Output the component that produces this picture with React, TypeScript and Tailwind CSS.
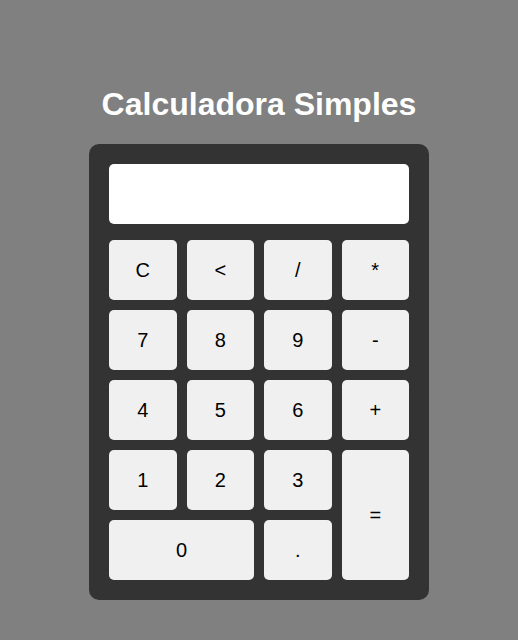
import { useState } from 'react';

type Key = {
  label: string;
  span?: string;
};

const keys: Key[] = [
  { label: 'C' },
  { label: '<' },
  { label: '/' },
  { label: '*' },
  { label: '7' },
  { label: '8' },
  { label: '9' },
  { label: '-' },
  { label: '4' },
  { label: '5' },
  { label: '6' },
  { label: '+' },
  { label: '1' },
  { label: '2' },
  { label: '3' },
  { label: '=', span: 'row-span-2' },
  { label: '0', span: 'col-span-2' },
  { label: '.' },
];

export default function App() {
  const [display, setDisplay] = useState('');

  const handleKey = (label: string) => {
    if (label === 'C') return setDisplay('');
    if (label === '<') return setDisplay((d) => d.slice(0, -1));
    if (label === '=') {
      try {
        // eslint-disable-next-line no-new-func
        const result = Function(`"use strict"; return (${display})`)();
        setDisplay(String(result));
      } catch {
        setDisplay('Erro');
      }
      return;
    }
    setDisplay((d) => d + label);
  };

  return (
    <div className="min-h-screen bg-[#808080] flex flex-col items-center pt-[86px] font-['Liberation_Sans',Arial,sans-serif]">
      <h1 className="text-[32px] leading-[37px] font-bold text-white mb-[21px]">
        Calculadora Simples
      </h1>

      <div className="w-[340px] bg-[#333333] rounded-[10px] p-5">
        <div className="h-[60px] bg-white rounded-[5px] mb-4 px-3 flex items-center justify-end text-2xl text-black overflow-hidden">
          {display}
        </div>

        <div className="grid grid-cols-4 auto-rows-[60px] gap-[10px]">
          {keys.map((key) => (
            <button
              key={key.label}
              type="button"
              onClick={() => handleKey(key.label)}
              className={`${key.span ?? ''} bg-[#f0f0f0] hover:bg-[#e0e0e0] rounded-[5px] text-[20px] text-black flex items-center justify-center cursor-pointer`}
            >
              {key.label}
            </button>
          ))}
        </div>
      </div>
    </div>
  );
}
